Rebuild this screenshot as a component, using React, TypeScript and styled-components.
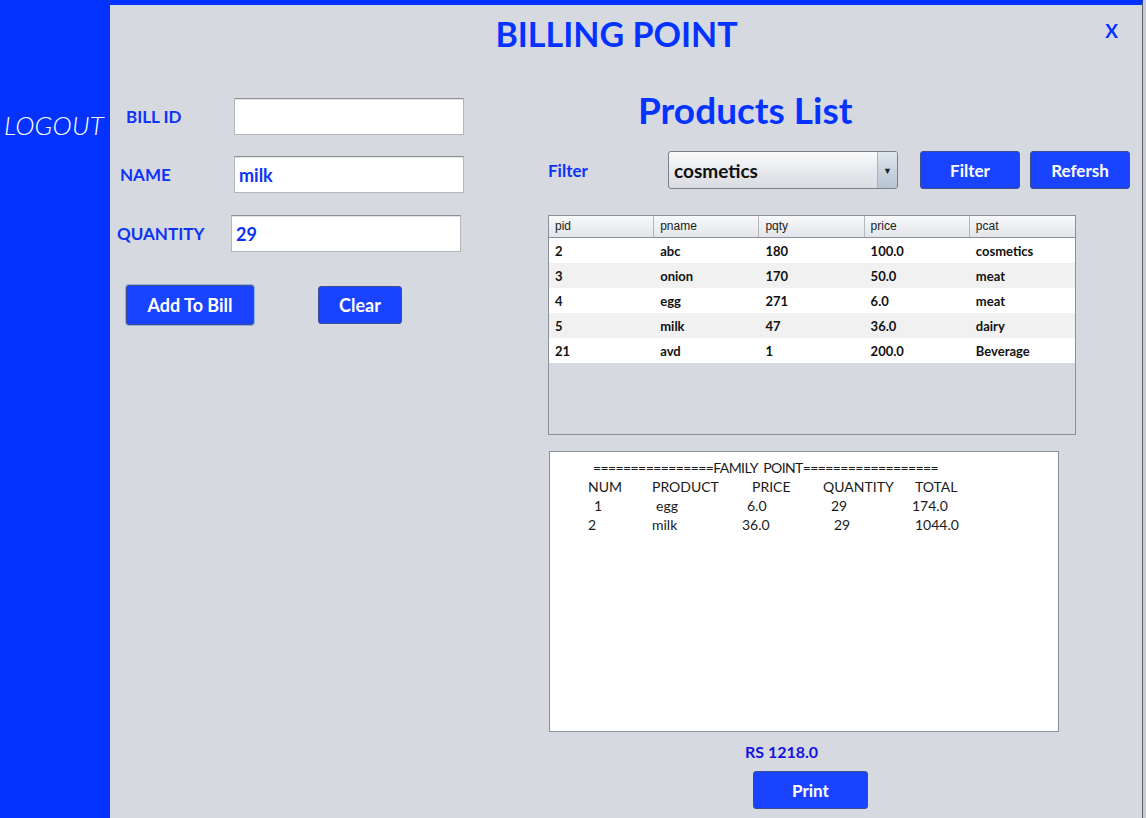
import { FC } from "react"
import styled, { createGlobalStyle } from "styled-components"

const BLUE = "#0433ff"
const BUTTON_BLUE = "#1a43ff"
const LABEL_BLUE = "#0d33f5"
const PANEL = "#d6d9e0"

const GlobalStyle = createGlobalStyle`
  html, body {
    margin: 0;
    padding: 0;
  }
  body {
    background: #c9ccd2;
    font-family: Lato, "Liberation Sans", sans-serif;
  }
`

const Screen = styled.div`
  display: flex;
  width: 1146px;
  height: 818px;
  overflow: hidden;
`

const Sidebar = styled.aside`
  width: 110px;
  flex-shrink: 0;
  box-sizing: border-box;
  padding: 110px 0 0 4px;
  background: ${BLUE};
`

const LogoutLink = styled.a`
  display: block;
  color: #fff;
  font-style: italic;
  font-weight: 300;
  font-size: 26px;
  line-height: 31px;
  letter-spacing: 0.2px;
  cursor: pointer;
`

const Main = styled.main`
  width: 1033px;
  flex-shrink: 0;
  box-sizing: border-box;
  display: flex;
  flex-direction: column;
  background: ${PANEL};
  border-top: 5px solid ${BLUE};
  border-right: 1px solid #5f6368;
`

const Header = styled.header`
  display: grid;
  grid-template-columns: 1fr auto 1fr;
  padding: 8px 19px 0 0;
`

const Title = styled.h1`
  grid-column: 2;
  margin: 0;
  color: ${BLUE};
  font-size: 34px;
  font-weight: 700;
  line-height: 42px;
`

const CloseButton = styled.button`
  justify-self: end;
  align-self: start;
  margin: 6px 5px 0 0;
  padding: 0;
  border: 0;
  background: none;
  color: ${BLUE};
  font-family: Lato, "Liberation Sans", sans-serif;
  font-size: 19px;
  font-weight: 700;
  line-height: 24px;
  cursor: pointer;
`

const Body = styled.div`
  display: flex;
`

const FormColumn = styled.section`
  width: 438px;
  display: flex;
  flex-direction: column;
  padding-top: 43px;
`

const FormRow = styled.div<{ $indent: number; $gap: number }>`
  display: flex;
  align-items: center;
  height: 37px;
  margin-top: ${({ $gap }) => $gap}px;
  padding-left: ${({ $indent }) => $indent}px;
`

const FieldLabel = styled.label<{ $width: number }>`
  width: ${({ $width }) => $width}px;
  color: ${LABEL_BLUE};
  font-size: 17px;
  font-weight: 700;
`

const TextField = styled.input`
  box-sizing: border-box;
  width: 230px;
  height: 37px;
  padding: 0 4px;
  border: 1px solid #b4b6ba;
  border-top-color: #8e9094;
  box-shadow: inset 0 1px 0 #e2e3e6;
  background: #fff;
  color: ${LABEL_BLUE};
  font-family: Lato, "Liberation Sans", sans-serif;
  font-size: 18px;
  font-weight: 700;
  outline: none;
`

const ActionRow = styled.div`
  display: flex;
  align-items: center;
  gap: 64px;
  margin-top: 33px;
  padding-left: 16px;
`

const BlueButton = styled.button<{ $width: number; $height?: number; $focused?: boolean; $size?: number }>`
  box-sizing: border-box;
  width: ${({ $width }) => $width}px;
  height: ${({ $height = 38 }) => $height}px;
  padding: 0;
  border: 1px solid #3d4f8f;
  border-radius: 3px;
  background: ${BUTTON_BLUE};
  color: #fff;
  font-family: Lato, "Liberation Sans", sans-serif;
  font-size: ${({ $size = 17 }) => $size}px;
  font-weight: 700;
  cursor: pointer;
  box-shadow: ${({ $focused }) => ($focused ? "0 0 0 1px #8fb0dc" : "none")};
`

const ProductsColumn = styled.section`
  flex: 1;
  display: flex;
  flex-direction: column;
  align-items: flex-start;
  padding-top: 33px;
`

const SectionTitle = styled.h2`
  margin: 0 0 0 90px;
  color: ${BLUE};
  font-size: 37px;
  font-weight: 700;
  line-height: 44px;
`

const FilterBar = styled.div`
  display: flex;
  align-items: center;
  margin-top: 19px;
`

const FilterLabel = styled.span`
  width: 120px;
  color: ${LABEL_BLUE};
  font-size: 17px;
  font-weight: 700;
`

const Combo = styled.div`
  box-sizing: border-box;
  display: flex;
  width: 230px;
  height: 38px;
  margin-right: 22px;
  border: 1px solid #7b7f86;
  border-radius: 3px;
  background: linear-gradient(#fbfbfc, #e6e8ec 55%, #d9dce2);
  overflow: hidden;
`

const ComboValue = styled.span`
  flex: 1;
  padding-left: 5px;
  color: #111;
  font-size: 19px;
  font-weight: 700;
  line-height: 37px;
`

const ComboArrow = styled.span`
  width: 19px;
  display: flex;
  align-items: center;
  justify-content: center;
  border-left: 1px solid #a9b2bd;
  background: linear-gradient(#dfe6ee, #b7c4d2);
  color: #222;
  font-size: 9px;
`

const ButtonGroup = styled.div`
  display: flex;
  gap: 10px;
`

const Table = styled.div`
  box-sizing: border-box;
  width: 528px;
  height: 220px;
  margin-top: 26px;
  border: 1px solid #8a8f99;
  background: ${PANEL};
`

const TableRow = styled.div<{ $striped?: boolean }>`
  display: grid;
  grid-template-columns: repeat(5, 1fr);
  height: 25px;
  align-items: center;
  background: ${({ $striped }) => ($striped ? "#f1f1f2" : "#fff")};
`

const HeaderRow = styled.div`
  display: grid;
  grid-template-columns: repeat(5, 1fr);
  height: 22px;
  box-sizing: border-box;
  border-bottom: 1px solid #8a8f99;
  background: linear-gradient(#f8f9fa, #e3e5ea);
`

const HeaderCell = styled.div`
  padding-left: 6px;
  border-right: 1px solid #b3b7be;
  color: #222;
  font-family: "Liberation Sans", Arial, sans-serif;
  font-size: 12px;
  line-height: 21px;

  &:last-child {
    border-right: 0;
  }
`

const Cell = styled.div`
  padding-left: 6px;
  color: #111;
  font-size: 13px;
  font-weight: 700;
`

const Receipt = styled.div`
  box-sizing: border-box;
  width: 510px;
  height: 281px;
  margin: 16px 0 0 1px;
  padding: 6px 0 0 38px;
  border: 1px solid #8a8f99;
  background: #fff;
  color: #1a1a1a;
  font-size: 14px;
  line-height: 19px;
`

const ReceiptRule = styled.div`
  padding-left: 5px;
  letter-spacing: -0.6px;
  white-space: pre;
`

const ReceiptLine = styled.div`
  display: grid;
  grid-template-columns: 64px 90px 81px 89px auto;
  white-space: pre;
`

const ReceiptCell = styled.span<{ $indent?: number }>`
  padding-left: ${({ $indent = 0 }) => $indent}px;
`

const Total = styled.div`
  margin: 10px 0 0 197px;
  color: #1414dc;
  font-size: 16px;
  font-weight: 700;
  line-height: 20px;
`

const PrintRow = styled.div`
  margin: 9px 0 0 205px;
`

type Product = { pid: number; pname: string; pqty: number; price: string; pcat: string }

const products: Product[] = [
  { pid: 2, pname: "abc", pqty: 180, price: "100.0", pcat: "cosmetics" },
  { pid: 3, pname: "onion", pqty: 170, price: "50.0", pcat: "meat" },
  { pid: 4, pname: "egg", pqty: 271, price: "6.0", pcat: "meat" },
  { pid: 5, pname: "milk", pqty: 47, price: "36.0", pcat: "dairy" },
  { pid: 21, pname: "avd", pqty: 1, price: "200.0", pcat: "Beverage" },
]

// each receipt cell: [text, indent]
const receiptLines: [string, number][][] = [
  [["NUM", 0], ["PRODUCT", 0], ["PRICE", 10], ["QUANTITY", 0], ["TOTAL", 3]],
  [["1", 6], ["egg", 4], ["6.0", 5], ["29", 8], ["174.0", 0]],
  [["2", 0], ["milk", 0], ["36.0", 0], ["29", 11], ["1044.0", 3]],
]

const fields = [
  { label: "BILL ID", value: "", indent: 16, width: 108, gap: 0 },
  { label: "NAME", value: "milk", indent: 10, width: 114, gap: 21 },
  { label: "QUANTITY", value: "29", indent: 7, width: 114, gap: 22 },
]

const ProductTable: FC = () => (
  <Table>
    <HeaderRow>
      {["pid", "pname", "pqty", "price", "pcat"].map((h) => (
        <HeaderCell key={h}>{h}</HeaderCell>
      ))}
    </HeaderRow>
    {products.map((p, i) => (
      <TableRow key={p.pid} $striped={i % 2 === 1}>
        <Cell>{p.pid}</Cell>
        <Cell>{p.pname}</Cell>
        <Cell>{p.pqty}</Cell>
        <Cell>{p.price}</Cell>
        <Cell>{p.pcat}</Cell>
      </TableRow>
    ))}
  </Table>
)

export default function App() {
  return (
    <>
      <GlobalStyle />
      <Screen>
        <Sidebar>
          <LogoutLink>LOGOUT</LogoutLink>
        </Sidebar>
        <Main>
          <Header>
            <Title>BILLING POINT</Title>
            <CloseButton>X</CloseButton>
          </Header>
          <Body>
            <FormColumn>
              {fields.map((f) => (
                <FormRow key={f.label} $indent={f.indent} $gap={f.gap}>
                  <FieldLabel $width={f.width}>{f.label}</FieldLabel>
                  <TextField value={f.value} readOnly />
                </FormRow>
              ))}
              <ActionRow>
                <BlueButton $width={128} $height={40} $size={18} $focused>
                  Add To Bill
                </BlueButton>
                <BlueButton $width={84} $size={18}>
                  Clear
                </BlueButton>
              </ActionRow>
            </FormColumn>
            <ProductsColumn>
              <SectionTitle>Products List</SectionTitle>
              <FilterBar>
                <FilterLabel>Filter</FilterLabel>
                <Combo>
                  <ComboValue>cosmetics</ComboValue>
                  <ComboArrow>▼</ComboArrow>
                </Combo>
                <ButtonGroup>
                  <BlueButton $width={100}>Filter</BlueButton>
                  <BlueButton $width={100}>Refersh</BlueButton>
                </ButtonGroup>
              </FilterBar>
              <ProductTable />
              <Receipt>
                <ReceiptRule>{"================FAMILY  POINT=================="}</ReceiptRule>
                {receiptLines.map((line, i) => (
                  <ReceiptLine key={i}>
                    {line.map(([text, indent], j) => (
                      <ReceiptCell key={j} $indent={indent}>
                        {text}
                      </ReceiptCell>
                    ))}
                  </ReceiptLine>
                ))}
              </Receipt>
              <Total>RS 1218.0</Total>
              <PrintRow>
                <BlueButton $width={115}>Print</BlueButton>
              </PrintRow>
            </ProductsColumn>
          </Body>
        </Main>
      </Screen>
    </>
  )
}
